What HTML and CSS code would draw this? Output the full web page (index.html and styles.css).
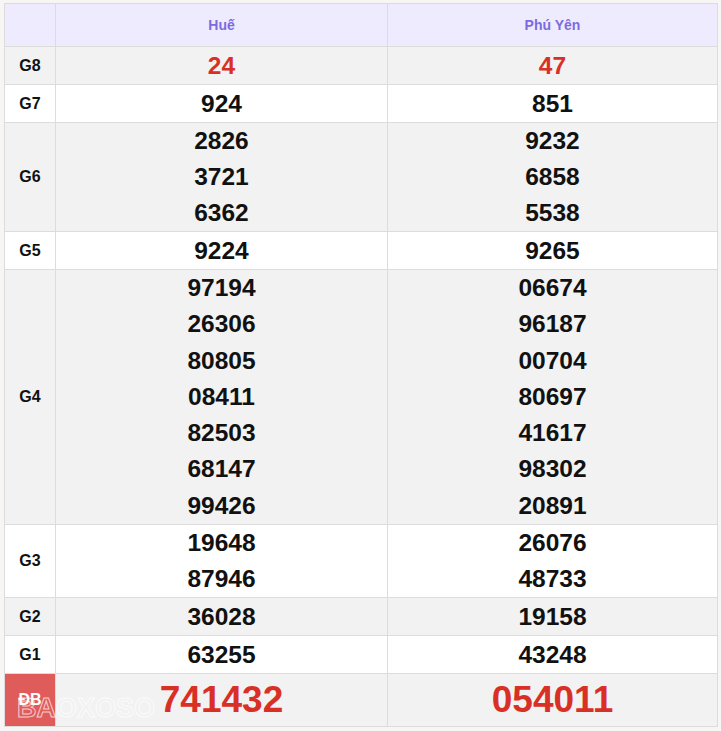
FILE: index.html
```
<!DOCTYPE html>
<html lang="vi">
<head>
<meta charset="utf-8">
<link rel="stylesheet" href="styles.css">
</head>
<body>
<table class="kq">
  <colgroup><col class="c1"><col class="c2"><col class="c3"></colgroup>
  <tr class="head"><th></th><th>Huế</th><th>Phú Yên</th></tr>
  <tr class="alt one"><td class="lbl">G8</td><td class="red g8"><div>24</div></td><td class="red g8"><div>47</div></td></tr>
  <tr class="one"><td class="lbl">G7</td><td><div>924</div></td><td><div>851</div></td></tr>
  <tr class="alt"><td class="lbl">G6</td><td><div>2826</div><div>3721</div><div>6362</div></td><td><div>9232</div><div>6858</div><div>5538</div></td></tr>
  <tr class="one"><td class="lbl">G5</td><td><div>9224</div></td><td><div>9265</div></td></tr>
  <tr class="alt g4"><td class="lbl">G4</td><td><div>97194</div><div>26306</div><div>80805</div><div>08411</div><div>82503</div><div>68147</div><div>99426</div></td><td><div>06674</div><div>96187</div><div>00704</div><div>80697</div><div>41617</div><div>98302</div><div>20891</div></td></tr>
  <tr><td class="lbl">G3</td><td><div>19648</div><div>87946</div></td><td><div>26076</div><div>48733</div></td></tr>
  <tr class="alt one"><td class="lbl">G2</td><td><div>36028</div></td><td><div>19158</div></td></tr>
  <tr class="one"><td class="lbl">G1</td><td><div>63255</div></td><td><div>43248</div></td></tr>
  <tr class="alt db"><td class="lbl dbl"><span class="dbtext">ĐB</span><span class="wm">BAOXOSO</span></td><td class="red big"><div>741432</div></td><td class="red big"><div>054011</div></td></tr>
</table>
</body>
</html>
```
FILE: styles.css
```
html, body { margin: 0; }
body {
  padding: 3px 4px 0 4px;
  background: #f7f6f4;
  font-family: "Liberation Sans", Arial, sans-serif;
}
.kq {
  border-collapse: collapse;
  width: 713px;
  table-layout: fixed;
  background: #fff;
}
.c1 { width: 51px; }
.c2 { width: 332px; }
.c3 { width: 330px; }
.kq th, .kq td {
  border: 1px solid #dcdcdc;
  padding: 0;
  text-align: center;
  vertical-align: middle;
}
.head th {
  background: #efebff;
  color: #7b6be0;
  font-size: 14px;
  font-weight: bold;
  height: 42px;
}
.alt td { background: #f2f2f2; }
.kq td div {
  line-height: 36px;
  font-size: 24.5px;
  font-weight: bold;
  color: #111;
}
.g4 td div { line-height: 36.3px; }
.one td { height: 37px; }
.one td div { line-height: 37px; }
.lbl {
  font-size: 16px;
  font-weight: bold;
  color: #111;
}
.red div { color: #d93025 !important; }
.g8 div { font-size: 25.5px; }
.db td { height: 52px; }
.big div { font-size: 37px !important; line-height: 52px !important; }
.dbl {
  position: relative;
  background: #e05c5a !important;
  color: #fff;
  overflow: visible;
}
.dbtext {
  position: relative;
  top: 0;
  color: #fff;
  font-size: 16px;
}
.wm {
  position: absolute;
  left: 12px;
  top: 19px;
  font-size: 27px;
  font-weight: bold;
  white-space: nowrap;
  color: transparent;
  -webkit-text-stroke: 1px rgba(255,255,255,0.7);
  letter-spacing: 0;
  pointer-events: none;
}
```
